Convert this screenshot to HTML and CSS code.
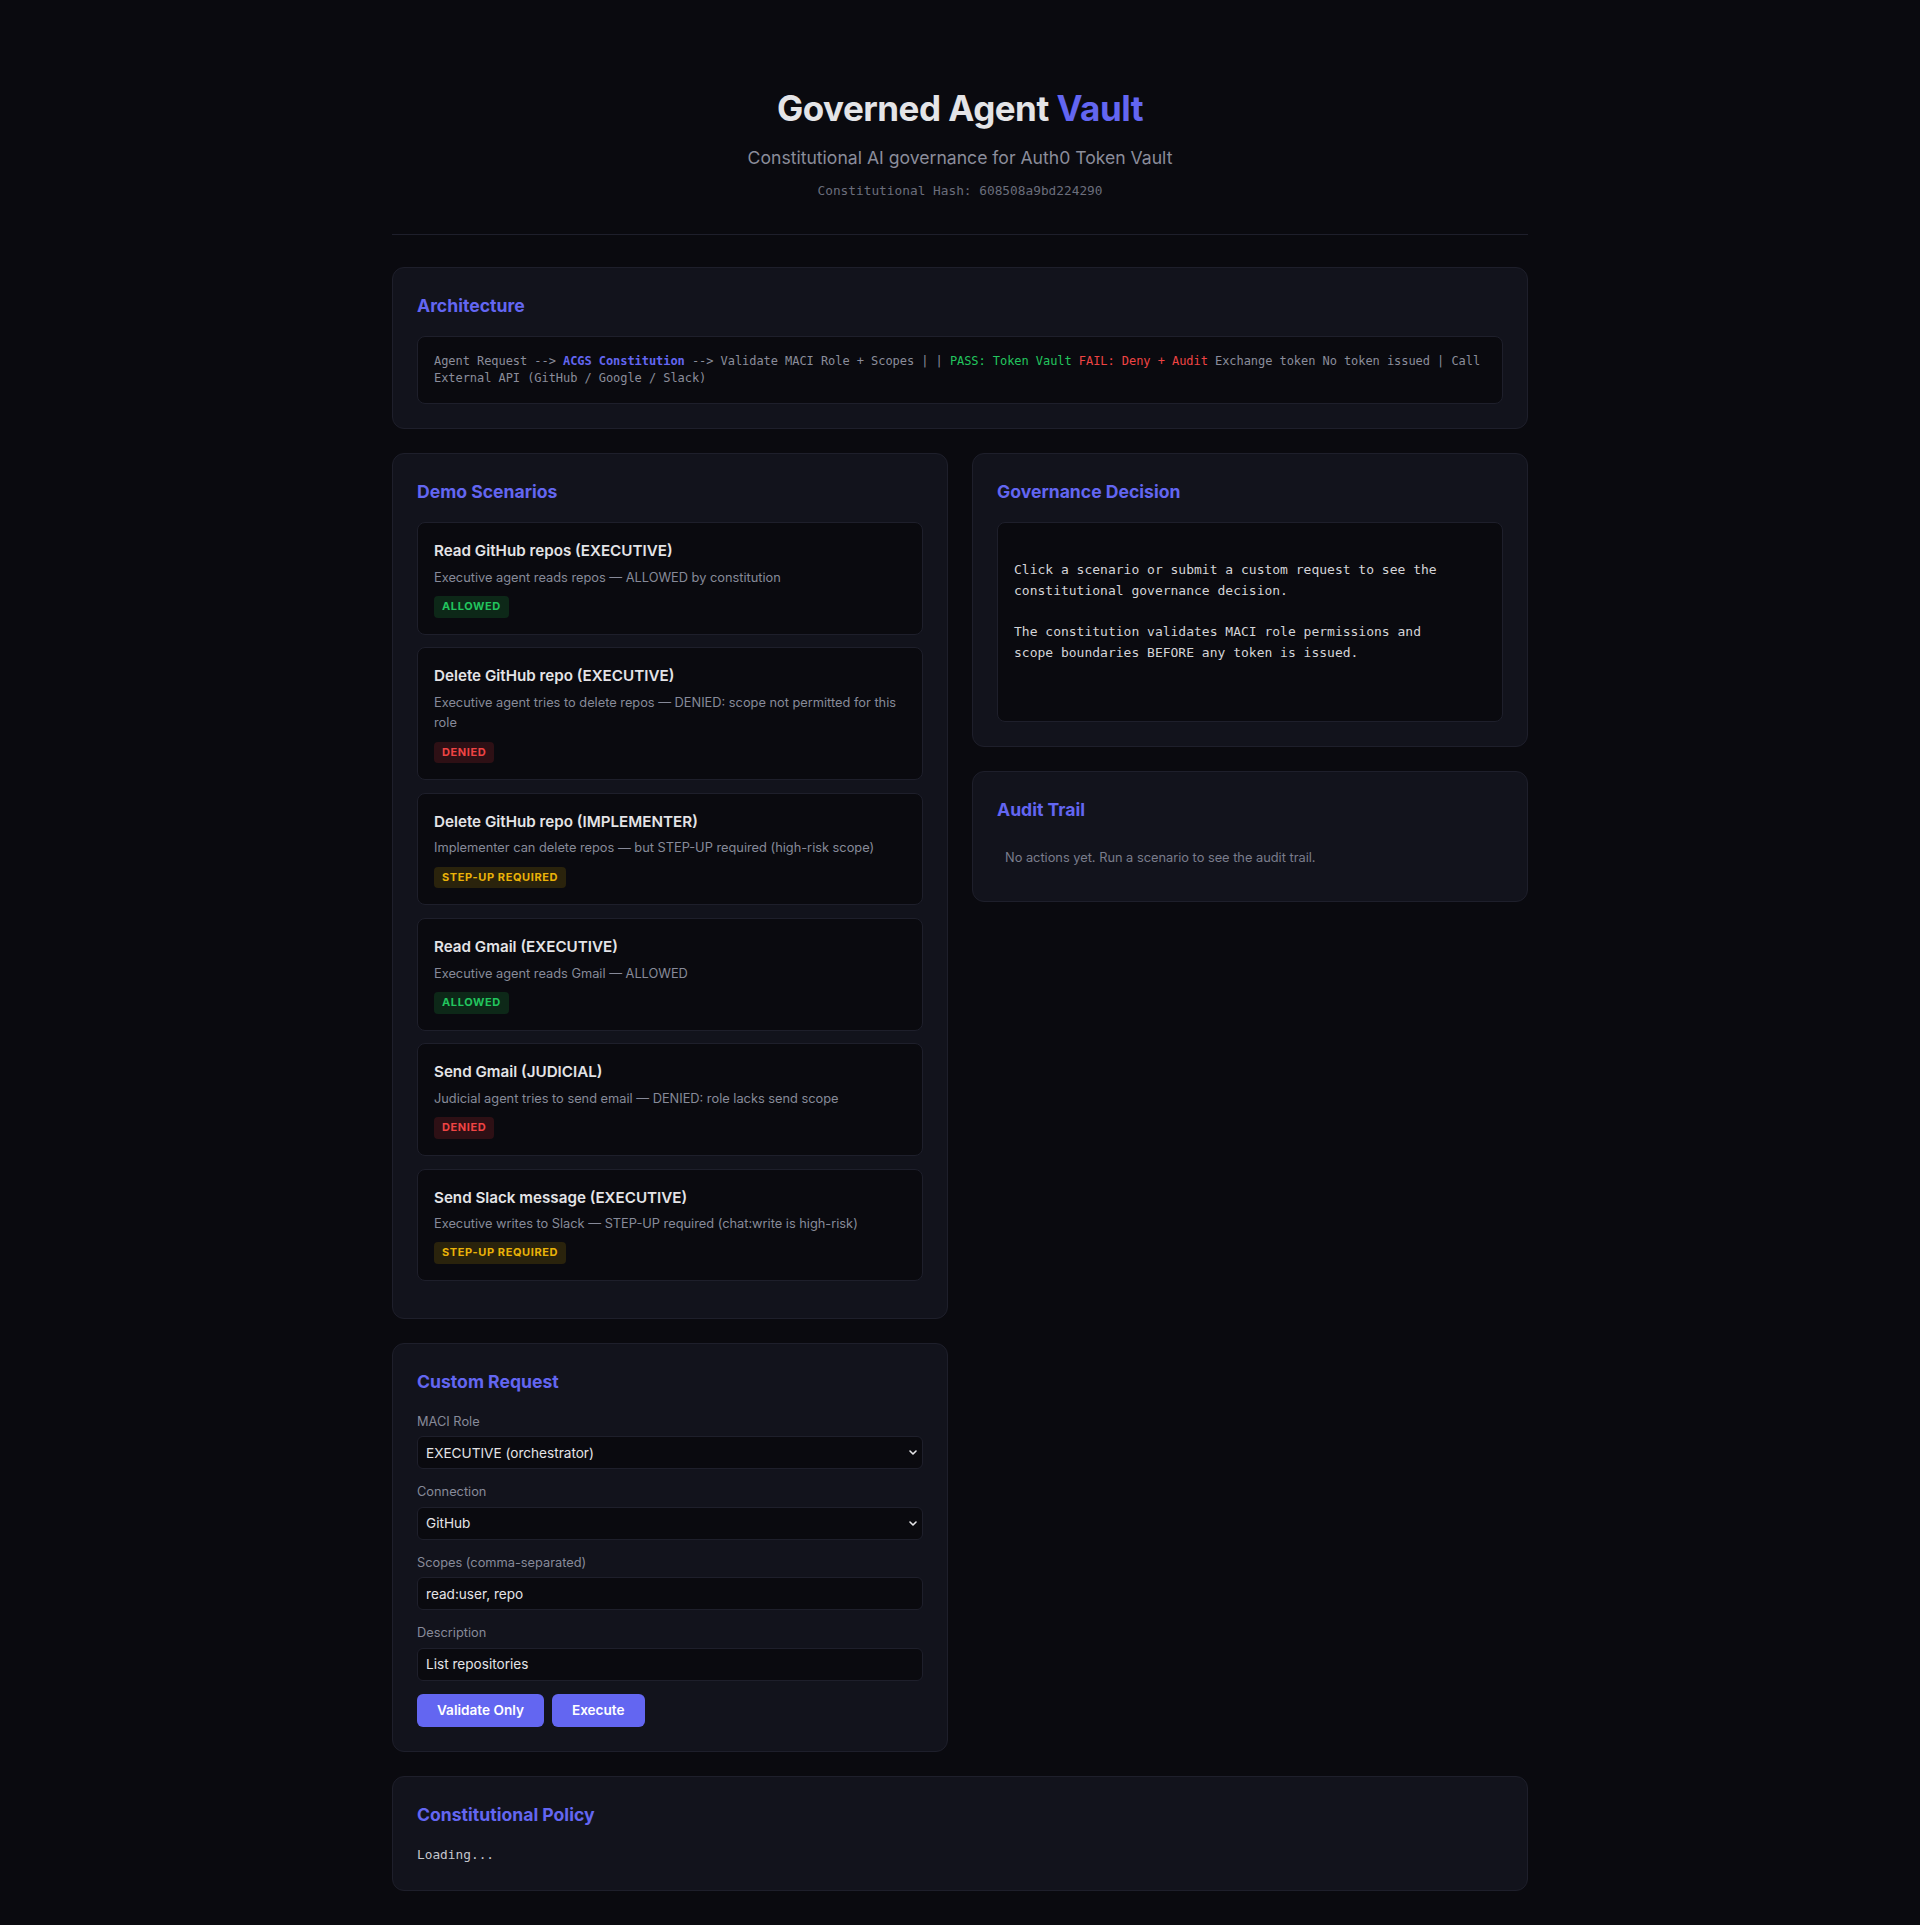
FILE: index.html
```html
<!DOCTYPE html>
<html>
<head>
  <meta charset="UTF-8">
  <meta name="viewport" content="width=device-width, initial-scale=1.0" />
  <title>Governed Agent Vault</title>
  <link rel="stylesheet" href="styles.css">
</head>

<body>
  <header>
    <h1>Governed Agent <span>Vault</span></h1>
    <p class="subtitle">Constitutional AI governance for Auth0 Token Vault</p>
    <p class="hash">Constitutional Hash: 608508a9bd224290</p>
  </header>

  <section class="card">
    <h2>Architecture</h2>
    <div class="arch">Agent Request --&gt; <b>ACGS Constitution</b> --&gt; Validate MACI Role + Scopes | | <span class="pass">PASS: Token Vault</span> <span class="fail">FAIL: Deny + Audit</span> Exchange token No token issued | Call External API (GitHub / Google / Slack)</div>
  </section>

  <div class="grid">
    <div class="col">
      <section class="card">
        <h2>Demo Scenarios</h2>
        <div class="scenario">
          <h3>Read GitHub repos (EXECUTIVE)</h3>
          <p>Executive agent reads repos — ALLOWED by constitution</p>
          <span class="badge allowed">ALLOWED</span>
        </div>
        <div class="scenario">
          <h3>Delete GitHub repo (EXECUTIVE)</h3>
          <p>Executive agent tries to delete repos — DENIED: scope not permitted for this role</p>
          <span class="badge denied">DENIED</span>
        </div>
        <div class="scenario">
          <h3>Delete GitHub repo (IMPLEMENTER)</h3>
          <p>Implementer can delete repos — but STEP-UP required (high-risk scope)</p>
          <span class="badge stepup">STEP-UP REQUIRED</span>
        </div>
        <div class="scenario">
          <h3>Read Gmail (EXECUTIVE)</h3>
          <p>Executive agent reads Gmail — ALLOWED</p>
          <span class="badge allowed">ALLOWED</span>
        </div>
        <div class="scenario">
          <h3>Send Gmail (JUDICIAL)</h3>
          <p>Judicial agent tries to send email — DENIED: role lacks send scope</p>
          <span class="badge denied">DENIED</span>
        </div>
        <div class="scenario">
          <h3>Send Slack message (EXECUTIVE)</h3>
          <p>Executive writes to Slack — STEP-UP required (chat:write is high-risk)</p>
          <span class="badge stepup">STEP-UP REQUIRED</span>
        </div>
      </section>

      <section class="card">
        <h2>Custom Request</h2>
        <label for="role">MACI Role</label>
        <div class="select">
          <select id="role">
            <option>EXECUTIVE (orchestrator)</option>
            <option>IMPLEMENTER</option>
            <option>JUDICIAL</option>
          </select>
          <svg viewBox="0 0 8 5" width="8" height="5"><path d="M1 1l3 3 3-3" /></svg>
        </div>
        <label for="conn">Connection</label>
        <div class="select">
          <select id="conn">
            <option>GitHub</option>
            <option>Google</option>
            <option>Slack</option>
          </select>
          <svg viewBox="0 0 8 5" width="8" height="5"><path d="M1 1l3 3 3-3" /></svg>
        </div>
        <label for="scopes">Scopes (comma-separated)</label>
        <input id="scopes" type="text" value="read:user, repo">
        <label for="desc">Description</label>
        <input id="desc" type="text" value="List repositories">
        <div class="actions">
          <button>Validate Only</button>
          <button>Execute</button>
        </div>
      </section>
    </div>

    <div class="col">
      <section class="card">
        <h2>Governance Decision</h2>
        <pre class="decision">

Click a scenario or submit a custom request to see the
constitutional governance decision.

The constitution validates MACI role permissions and
scope boundaries BEFORE any token is issued.</pre>
      </section>

      <section class="card">
        <h2>Audit Trail</h2>
        <div class="empty">No actions yet. Run a scenario to see the audit trail.</div>
      </section>
    </div>
  </div>

  <section class="card">
    <h2>Constitutional Policy</h2>
    <pre class="policy">Loading...</pre>
  </section>
</body>

</html>
```

FILE: styles.css
```css
* {
  box-sizing: border-box;
  padding: 0;
  margin: 0;
}

html {
  background: #0a0a0f;
}

body {
  max-width: 1200px;
  margin: 0 auto;
  padding: 32px;
  font-family: Inter, "Noto Sans", sans-serif;
  color: #e4e4e7;
  line-height: 1.6;
}

header {
  text-align: center;
  padding: 55px 0 32px;
  border-bottom: 1px solid #1e1f2b;
  margin-bottom: 32px;
}

h1 {
  font-size: 35px;
  font-weight: 700;
  line-height: 42px;
  letter-spacing: -0.5px;
  color: #e4e4e7;
}

h1 span {
  color: #6366f1;
}

.subtitle {
  margin-top: 15px;
  font-size: 17.6px;
  color: #8b8d9b;
}

.hash {
  margin-top: 9px;
  font-family: "DejaVu Sans Mono", monospace;
  font-size: 12.8px;
  color: #6b6e7c;
}

.card {
  background: #12131c;
  border: 1px solid #1e1f2b;
  border-radius: 12px;
  padding: 24px;
  margin-bottom: 24px;
}

h2 {
  font-size: 17.6px;
  font-weight: 700;
  line-height: 28px;
  color: #6366f1;
  margin-bottom: 16px;
}

.arch {
  background: #0a0a0f;
  border: 1px solid #1e1f2b;
  border-radius: 8px;
  padding: 16px;
  font-family: "DejaVu Sans Mono", monospace;
  font-size: 12px;
  line-height: 17.3px;
  letter-spacing: -0.06px;
  color: #8b8d9b;
}

.arch b {
  color: #6366f1;
}

.arch .pass {
  color: #22c55e;
}

.arch .fail {
  color: #ef4444;
}

.grid {
  display: grid;
  grid-template-columns: 1fr 1fr;
  gap: 24px;
  align-items: start;
}

.scenario {
  background: #0a0a0f;
  border: 1px solid #1e1f2b;
  border-radius: 8px;
  padding: 16px;
  margin-bottom: 12.8px;
}

.scenario h3 {
  font-size: 15.2px;
  font-weight: 600;
  line-height: 24.3px;
  color: #e4e4e7;
  margin-bottom: 4px;
}

.scenario p {
  font-size: 12.8px;
  line-height: 20.5px;
  color: #878a99;
  margin-bottom: 8px;
}

.badge {
  display: block;
  width: fit-content;
  font-size: 11px;
  font-weight: 700;
  line-height: 17.6px;
  letter-spacing: 0.6px;
  padding: 2px 8px;
  border-radius: 4px;
}

.badge.allowed {
  background: #0d2818;
  color: #22c55e;
}

.badge.denied {
  background: #2e1015;
  color: #ef4444;
}

.badge.stepup {
  background: #2a230c;
  color: #eab308;
}

label {
  display: block;
  font-size: 12.8px;
  line-height: 20.5px;
  color: #878a99;
  margin-bottom: 4px;
}

select,
input {
  display: block;
  width: 100%;
  height: 33px;
  background: #0a0a0f;
  border: 1px solid #1e1f2b;
  border-radius: 6px;
  color: #e4e4e7;
  font-family: Inter, "Noto Sans", sans-serif;
  font-size: 13.6px;
  padding: 0 8px;
  margin-bottom: 13px;
}

.select {
  position: relative;
}

.select select {
  appearance: none;
  padding-right: 24px;
}

.select svg {
  position: absolute;
  right: 6px;
  top: 14px;
  fill: none;
  stroke: #e4e4e7;
  stroke-width: 1.6;
  stroke-linecap: round;
  stroke-linejoin: round;
}

.actions {
  display: flex;
  gap: 8px;
}

button {
  background: #6366f1;
  color: #fff;
  border: none;
  border-radius: 6px;
  font-family: Inter, "Noto Sans", sans-serif;
  font-size: 13.6px;
  font-weight: 600;
  line-height: 17.6px;
  padding: 8px 20px;
  cursor: pointer;
}

.decision {
  background: #0a0a0f;
  border: 1px solid #1e1f2b;
  border-radius: 8px;
  padding: 16px;
  min-height: 200px;
  font-family: "DejaVu Sans Mono", monospace;
  font-size: 13px;
  line-height: 20.8px;
  color: #d4d4d8;
  white-space: pre-wrap;
}

.empty {
  padding: 8px;
  font-size: 12.8px;
  line-height: 20.5px;
  color: #7a7d8c;
}

.policy {
  font-family: "DejaVu Sans Mono", monospace;
  font-size: 12.8px;
  line-height: 20.5px;
  color: #c4c6ce;
}
```
